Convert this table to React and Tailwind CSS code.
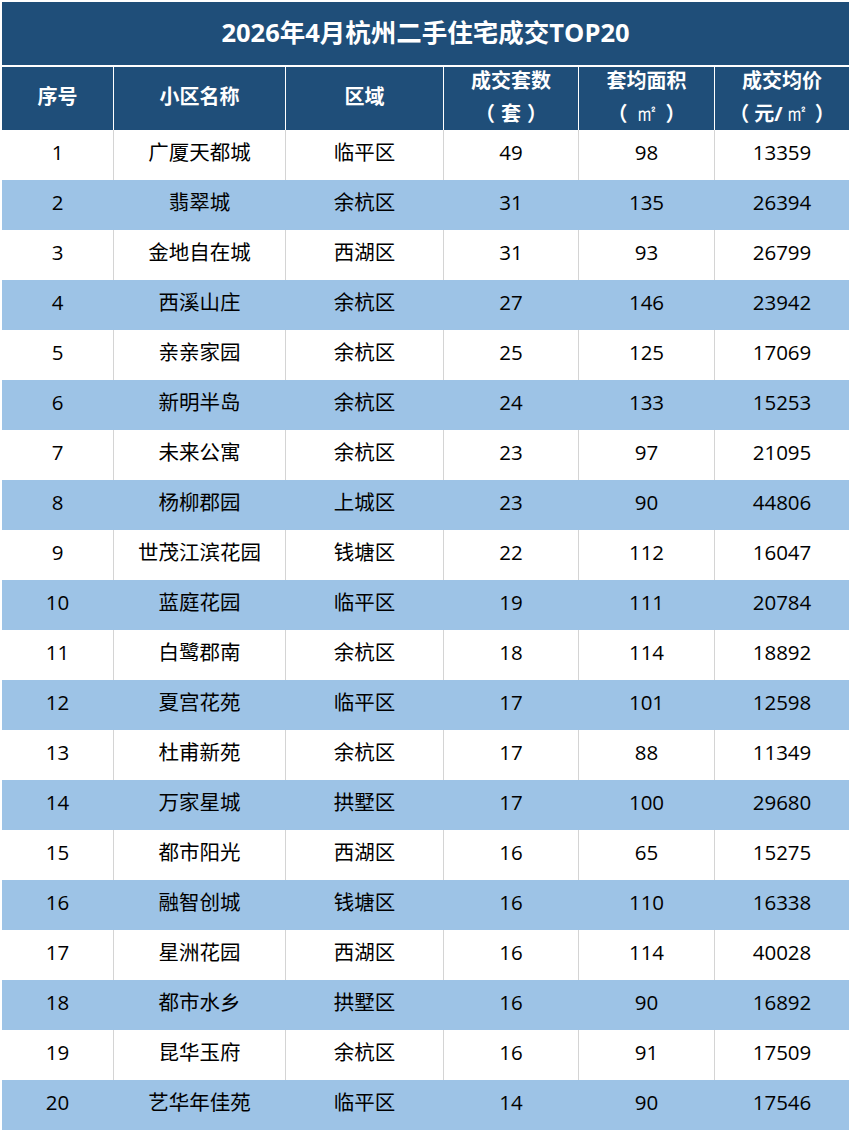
const rows = [
  [1, "广厦天都城", "临平区", 49, 98, 13359],
  [2, "翡翠城", "余杭区", 31, 135, 26394],
  [3, "金地自在城", "西湖区", 31, 93, 26799],
  [4, "西溪山庄", "余杭区", 27, 146, 23942],
  [5, "亲亲家园", "余杭区", 25, 125, 17069],
  [6, "新明半岛", "余杭区", 24, 133, 15253],
  [7, "未来公寓", "余杭区", 23, 97, 21095],
  [8, "杨柳郡园", "上城区", 23, 90, 44806],
  [9, "世茂江滨花园", "钱塘区", 22, 112, 16047],
  [10, "蓝庭花园", "临平区", 19, 111, 20784],
  [11, "白鹭郡南", "余杭区", 18, 114, 18892],
  [12, "夏宫花苑", "临平区", 17, 101, 12598],
  [13, "杜甫新苑", "余杭区", 17, 88, 11349],
  [14, "万家星城", "拱墅区", 17, 100, 29680],
  [15, "都市阳光", "西湖区", 16, 65, 15275],
  [16, "融智创城", "钱塘区", 16, 110, 16338],
  [17, "星洲花园", "西湖区", 16, 114, 40028],
  [18, "都市水乡", "拱墅区", 16, 90, 16892],
  [19, "昆华玉府", "余杭区", 16, 91, 17509],
  [20, "艺华年佳苑", "临平区", 14, 90, 17546],
];

const cols = "grid grid-cols-[111px_172px_158px_135px_136px_135px]";
const unit = "font-['Liberation_Serif',serif] font-normal text-[24px]";
const twoLine = "flex flex-col items-center justify-start border-l border-white leading-[33px] pt-[0px] -mt-[3px]";

export default function App() {
  return (
    <div className="w-[852px] h-[1131px] bg-white pt-[2px] pl-[2px] font-['Open_Sans','Noto_Sans_CJK_SC',sans-serif]">
      <div className="w-[847px]">
        <div className="h-[63px] bg-[#1f4e79] flex items-center justify-center pb-[3px] text-white text-[25.5px] font-bold">
          2026年4月杭州二手住宅成交TOP20
        </div>
        <div className={`${cols} h-[65px] border-t-2 border-white bg-[#1f4e79] text-white font-bold text-[20px] [text-spacing-trim:space-all]`}>
          <div className="flex items-center justify-center pb-[3px]">序号</div>
          <div className="flex items-center justify-center pb-[3px] border-l border-white">小区名称</div>
          <div className="flex items-center justify-center pb-[3px] border-l border-white">区域</div>
          <div className="flex flex-col items-center border-l border-white leading-[33px]">
            <span className="-mt-[3px]">成交套数</span>
            <span>（<span className="mx-[6px]">套</span>）</span>
          </div>
          <div className="flex flex-col items-center border-l border-white leading-[33px]">
            <span className="-mt-[3px]">套均面积</span>
            <span>（<span className={`${unit} mx-[7px]`}>㎡</span>）</span>
          </div>
          <div className="flex flex-col items-center border-l border-white leading-[33px]">
            <span className="-mt-[3px]">成交均价</span>
            <span>（<span className="ml-[5px]">元/</span><span className={`${unit} ml-[2px] mr-[6px]`}>㎡</span>）</span>
          </div>
        </div>
        {rows.map((r, i) => {
          const blue = i % 2 === 1;
          const line = blue ? "border-l border-[#9dc3e6]" : "border-l border-[#d4d4d4]";
          return (
            <div
              key={r[0]}
              className={`${cols} h-[50px] text-[20.5px] text-black ${blue ? "bg-[#9dc3e6]" : "bg-white"}`}
            >
              {r.map((v, j) => (
                <div key={j} className={`flex items-center justify-center pb-[5px] ${j > 0 ? line : ""}`}>
                  {v}
                </div>
              ))}
            </div>
          );
        })}
      </div>
    </div>
  );
}
